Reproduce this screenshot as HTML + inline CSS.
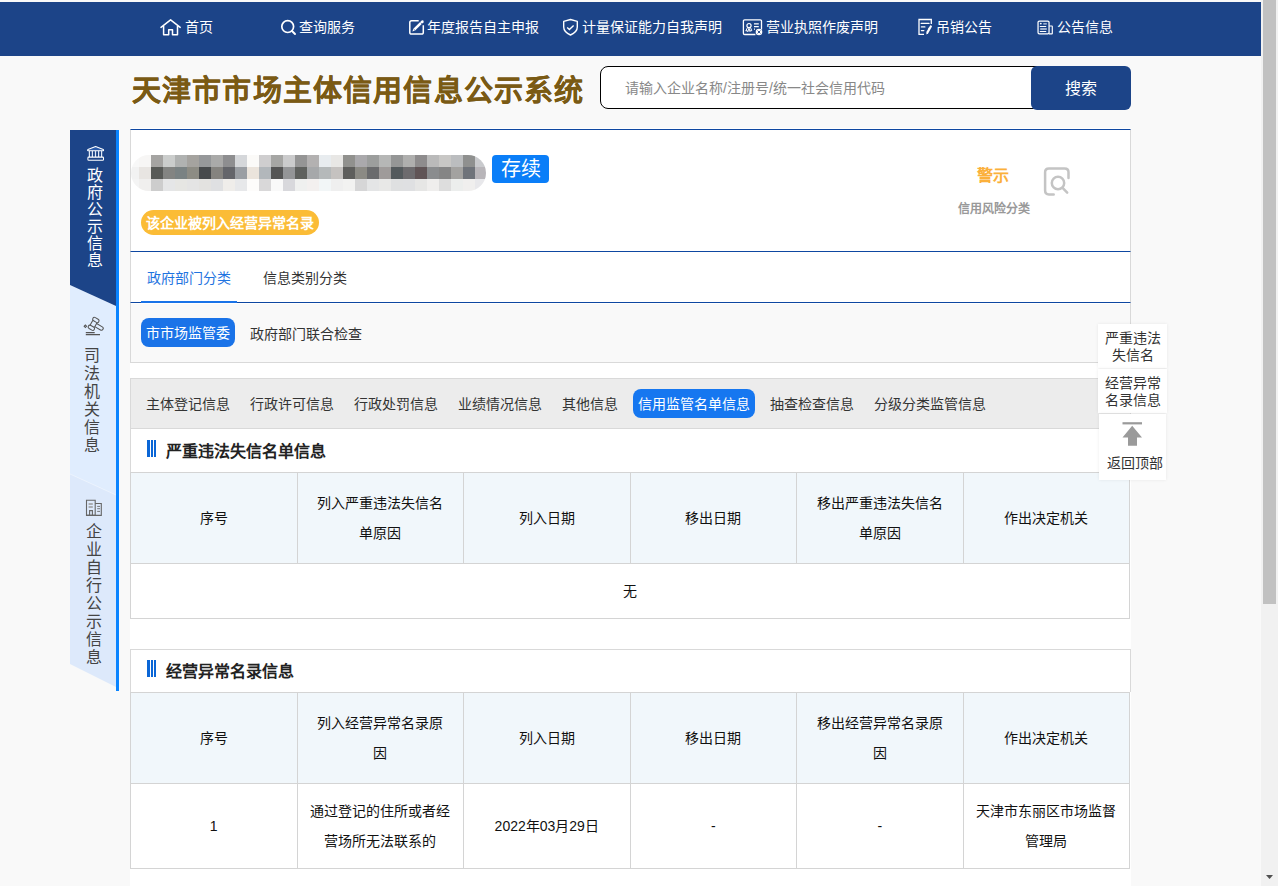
<!DOCTYPE html>
<html lang="zh-CN"><head><meta charset="utf-8">
<style>
*{margin:0;padding:0;box-sizing:border-box;}
html,body{width:1278px;height:886px;overflow:hidden;background:#f9f9f9;font-family:"Liberation Sans",sans-serif;color:#333;}
.abs{position:absolute;}
#nav{position:absolute;left:0;top:2px;width:1261px;height:54px;background:#1c4488;}
.ni{position:absolute;top:-2px;height:54px;line-height:54px;color:#fff;font-size:14px;font-weight:500;white-space:nowrap;}
.ni svg{position:absolute;}
#sb{position:absolute;left:1261px;top:0;width:17px;height:886px;background:#f1f1f1;}
#thumb{position:absolute;left:2px;top:0;width:13px;height:604px;background:#c1c1c1;}
#title{position:absolute;left:132px;top:71px;font-size:29px;font-weight:bold;color:#7a5a14;line-height:41px;white-space:nowrap;letter-spacing:1.16px;-webkit-text-stroke:0.2px #7a5a14;}
#search{position:absolute;left:600px;top:66px;width:450px;height:43px;border:1px solid #000;border-radius:8px;background:#fff;}
#search span{position:absolute;left:24px;top:1px;line-height:41px;font-size:14px;color:#888;white-space:nowrap;}
#sbtn{position:absolute;left:1031px;top:66px;width:100px;height:44px;background:#1c4488;border-radius:6px;color:#fff;font-size:16px;line-height:46px;font-weight:500;text-align:center;}
#side{position:absolute;left:70px;top:130px;width:49px;height:561px;}
#panel{position:absolute;left:130px;top:129px;width:1001px;height:757px;background:#fff;box-shadow:0 -1px 0 #fff;}

.vt{position:absolute;font-size:16px;width:16px;text-align:center;}
#top{position:absolute;left:0;top:0;width:1001px;height:123px;border:1px solid #d9d9d9;border-top:1px solid #0e47a1;border-bottom:1px solid #0e47a1;}
#badge{position:absolute;left:362px;top:26px;width:57px;height:28px;background:#0a7ef8;border-radius:4px;color:#fff;font-size:20px;line-height:28px;text-align:center;}
#warn{position:absolute;left:11px;top:81px;width:178px;height:25px;background:#fbbc36;border-radius:13px;color:#fff;font-size:14px;font-weight:bold;line-height:27px;text-align:center;white-space:nowrap;}
#risk1{position:absolute;left:847px;top:35px;font-size:16px;font-weight:bold;color:#fbb03b;line-height:24px;}
#risk2{position:absolute;left:828px;top:72px;font-size:12px;font-weight:bold;color:#999;line-height:16px;}
#tabs{position:absolute;left:0;top:123px;width:1001px;height:51px;border-left:1px solid #d9d9d9;border-right:1px solid #d9d9d9;border-bottom:1px solid #0e47a1;}
.tab{position:absolute;left:16px;top:1px;line-height:50px;font-size:14px;color:#333;white-space:nowrap;}
.tab.act{color:#1f74e0;}
#tabline{position:absolute;left:10px;top:49px;width:96px;height:2px;background:#1a73e8;}
#sub{position:absolute;left:0;top:174px;width:1001px;height:60px;background:#f9f9f9;box-shadow:inset 0 1px 0 #fff;border-left:1px solid #d9d9d9;border-right:1px solid #d9d9d9;border-bottom:1px solid #d9d9d9;}
#subact{position:absolute;left:10px;top:15px;width:94px;height:29px;background:#1a73e8;border-radius:8px;color:#fff;font-size:14px;line-height:31px;font-weight:500;text-align:center;white-space:nowrap;}
#cats{position:absolute;left:0;top:249px;width:1001px;height:51px;background:#ececec;border:1px solid #d9d9d9;}
#cats span{position:absolute;top:1px;line-height:49px;font-size:14px;color:#333;white-space:nowrap;}
#catact{position:absolute;left:502px;top:10px;width:122px;height:29px;background:#1677f0;border-radius:8px;color:#fff;font-size:14px;line-height:31px;font-weight:500;text-align:center;white-space:nowrap;}
.sec{position:absolute;left:0;width:1001px;}
.st{position:absolute;left:0;top:0;width:1001px;height:43px;border-left:1px solid #d9d9d9;border-right:1px solid #d9d9d9;font-size:16px;font-weight:bold;color:#222;line-height:45px;padding-left:35px;}
.st i{position:absolute;top:11px;width:2px;height:17px;background:#0b66d6;}
.st i:nth-child(1){left:16px;width:3px}.st i:nth-child(2){left:20px}.st i:nth-child(3){left:23px}
table{position:absolute;left:0;width:1000px;border-collapse:collapse;table-layout:fixed;}
td{border:1px solid #d4d4d4;text-align:center;font-size:14px;color:#111;line-height:30px;}
tr.hd{height:91px;background:#f1f7fb;}
#float{position:absolute;left:1098px;top:324px;width:69px;height:156px;}
.fb{position:absolute;left:0;width:69px;background:#fff;font-size:14px;line-height:17px;text-align:center;color:#333;box-shadow:0 0 3px rgba(0,0,0,0.08);}
</style></head><body>
<div id="nav">
  <div class="ni" style="left:160px">
    <svg width="21" height="18" viewBox="0 0 21 18" style="left:0;top:18px"><path d="M1 9.4 L10.6 1.8 L20.2 9.4 M3.6 8.2 V16.8 H8.7 V11.8 H12.5 V16.8 H17.5 V8.2" fill="none" stroke="#fff" stroke-width="1.5" stroke-linejoin="round" stroke-linecap="round"/></svg>
    <span style="position:absolute;left:25px;top:0">首页</span>
  </div>
  <div class="ni" style="left:280px">
    <svg width="17" height="17" viewBox="0 0 17 17" style="left:0;top:19px"><circle cx="7.7" cy="7.6" r="5.9" fill="none" stroke="#fff" stroke-width="1.7"/><path d="M12 12 L15 15" stroke="#fff" stroke-width="1.9" stroke-linecap="round"/></svg>
    <span style="position:absolute;left:19px;top:0">查询服务</span>
  </div>
  <div class="ni" style="left:408px">
    <svg width="17" height="17" viewBox="0 0 17 17" style="left:0;top:19px;overflow:visible"><path d="M10.7 1.8 H3.6 Q1.8 1.8 1.8 3.6 V13.4 Q1.8 15.1 3.6 15.1 H13.5 Q15.3 15.1 15.3 13.4 V6.2" fill="none" stroke="#fff" stroke-width="1.5"/><path d="M4.4 12.4 L5.3 9.7 L13.7 1.5 Q14.6 0.9 15.3 1.6 Q16 2.4 15.5 3.3 L7.1 11.5 Z" fill="#fff"/><path d="M12.6 3.6 L14.2 5.2 M5.6 10 L7 11.4" stroke="#1c4488" stroke-width="0.6"/></svg>
    <span style="position:absolute;left:19px;top:0">年度报告自主申报</span>
  </div>
  <div class="ni" style="left:562px">
    <svg width="17" height="19" viewBox="0 0 17 19" style="left:0;top:18px"><path d="M8.5 1.5 L15.3 3.4 V9 Q15.3 14 8.5 17 Q1.7 14 1.7 9 V3.4 Z" fill="none" stroke="#fff" stroke-width="1.4" stroke-linejoin="round"/><path d="M5.2 9.5 L7.4 11.5 L11.6 7.5" fill="none" stroke="#fff" stroke-width="1.4"/></svg>
    <span style="position:absolute;left:20px;top:0">计量保证能力自我声明</span>
  </div>
  <div class="ni" style="left:742px">
    <svg width="22" height="18" viewBox="0 0 22 18" style="left:0;top:19px"><path d="M19.5 10.4 V2.1 Q19.5 0.8 18.2 0.8 H2.7 Q1.4 0.8 1.4 2.1 V14.2 Q1.4 15.5 2.7 15.5 H13.4" fill="none" stroke="#fff" stroke-width="1.3"/><circle cx="7" cy="6.6" r="2.1" fill="none" stroke="#fff" stroke-width="1.2"/><path d="M5.6 8.3 L3.8 12 L5.2 11.6 L5.8 12.8 L7 9.2 M8.4 8.3 L9.8 11.8 L8.6 11.4 L8 12.6 L7 9.2" fill="none" stroke="#fff" stroke-width="1"/><path d="M12 4.9 H16.8 M12 7.6 H16.8" stroke="#fff" stroke-width="1.2"/><path d="M12.5 9.5 V10.8" stroke="#fff" stroke-width="1"/><circle cx="17" cy="13" r="3.3" fill="#fff"/><path d="M15.6 11.6 L18.4 14.4 M18.4 11.6 L15.6 14.4" stroke="#1c4488" stroke-width="0.9"/></svg>
    <span style="position:absolute;left:24px;top:0">营业执照作废声明</span>
  </div>
  <div class="ni" style="left:918px">
    <svg width="16" height="18" viewBox="0 0 16 18" style="left:0;top:18px"><path d="M6 16.4 H1 V1.5 H13.3 V6" fill="none" stroke="#fff" stroke-width="1.3"/><path d="M3.2 5.4 H11 M3.4 8.9 H6.9 M3.4 12.6 H5.8" stroke="#fff" stroke-width="1.3" stroke-linecap="round"/><path d="M8.4 16.4 L8.35 14.09 L12.15 7.45 Q13.1 6.9 14.05 8.55 L10.25 15.19 Z" fill="#fff"/><path d="M11.2 9.5 L10.4 11" stroke="#fff" stroke-width="0.8"/></svg>
    <span style="position:absolute;left:18px;top:0">吊销公告</span>
  </div>
  <div class="ni" style="left:1037px">
    <svg width="17" height="18" viewBox="0 0 17 18" style="left:0;top:18px"><rect x="1.05" y="3" width="11" height="12.8" rx="1.3" fill="none" stroke="#fff" stroke-width="1.25"/><path d="M12.1 8 H14.9 Q15.3 8 15.3 8.4 V15.4 Q15.3 15.8 14.9 15.8 H12" fill="none" stroke="#fff" stroke-width="1.15"/><circle cx="3.8" cy="5.6" r="0.9" fill="#fff"/><path d="M6.3 5.9 H9.8 M3.2 11 H9.8" stroke="#c8d3e6" stroke-width="1.3"/><path d="M3.2 8.5 H8.8 M3.2 13.5 H8.8" stroke="#fff" stroke-width="1.1" stroke-linecap="round"/></svg>
    <span style="position:absolute;left:20px;top:0">公告信息</span>
  </div>
</div>
<div id="sb"><div id="thumb"></div><svg width="17" height="10" style="position:absolute;left:0;top:871px"><path d="M5 4 H12 L8.5 8 Z" fill="#505050"/></svg></div>
<div id="title">天津市市场主体信用信息公示系统</div>
<div id="search"><span>请输入企业名称/注册号/统一社会信用代码</span></div>
<div id="sbtn">搜索</div>
<div id="panel">
  <div id="top"></div>
  <svg width="355" height="36" style="position:absolute;left:1px;top:26px"><defs><clipPath id="pc"><rect x="0" y="0" width="355" height="36" rx="18"/></clipPath></defs><g clip-path="url(#pc)" shape-rendering="crispEdges"><rect x="-4" y="0" width="12" height="12" fill="#f8f8f8"/><rect x="8" y="0" width="12" height="12" fill="#f7f6f5"/><rect x="20" y="0" width="12" height="12" fill="#a5a4a2"/><rect x="32" y="0" width="12" height="12" fill="#cbcdcc"/><rect x="44" y="0" width="12" height="12" fill="#b0b2b1"/><rect x="56" y="0" width="12" height="12" fill="#a5a39f"/><rect x="68" y="0" width="12" height="12" fill="#96989a"/><rect x="80" y="0" width="12" height="12" fill="#aaaaa9"/><rect x="92" y="0" width="12" height="12" fill="#8e8e90"/><rect x="104" y="0" width="12" height="12" fill="#d5d7da"/><rect x="116" y="0" width="12" height="12" fill="#fbfaf8"/><rect x="128" y="0" width="12" height="12" fill="#cfcecf"/><rect x="140" y="0" width="12" height="12" fill="#a6a6a4"/><rect x="152" y="0" width="12" height="12" fill="#cbcbcc"/><rect x="164" y="0" width="12" height="12" fill="#959595"/><rect x="176" y="0" width="12" height="12" fill="#b3b1b1"/><rect x="188" y="0" width="12" height="12" fill="#e8ecef"/><rect x="200" y="0" width="12" height="12" fill="#e8e7e5"/><rect x="212" y="0" width="12" height="12" fill="#91918e"/><rect x="224" y="0" width="12" height="12" fill="#aaa9ac"/><rect x="236" y="0" width="12" height="12" fill="#9c9e9d"/><rect x="248" y="0" width="12" height="12" fill="#b6b7b6"/><rect x="260" y="0" width="12" height="12" fill="#959696"/><rect x="272" y="0" width="12" height="12" fill="#afafae"/><rect x="284" y="0" width="12" height="12" fill="#8e8c8d"/><rect x="296" y="0" width="12" height="12" fill="#bababa"/><rect x="308" y="0" width="12" height="12" fill="#c8c7c5"/><rect x="320" y="0" width="12" height="12" fill="#bbbdbf"/><rect x="332" y="0" width="12" height="12" fill="#8f908f"/><rect x="344" y="0" width="12" height="12" fill="#c9cacd"/><rect x="-4" y="12" width="12" height="12" fill="#f2f2f2"/><rect x="8" y="12" width="12" height="12" fill="#e8e5e2"/><rect x="20" y="12" width="12" height="12" fill="#585a57"/><rect x="32" y="12" width="12" height="12" fill="#838482"/><rect x="44" y="12" width="12" height="12" fill="#7a8283"/><rect x="56" y="12" width="12" height="12" fill="#8d8c84"/><rect x="68" y="12" width="12" height="12" fill="#474a4c"/><rect x="80" y="12" width="12" height="12" fill="#85837f"/><rect x="92" y="12" width="12" height="12" fill="#64656a"/><rect x="104" y="12" width="12" height="12" fill="#9a9ea3"/><rect x="116" y="12" width="12" height="12" fill="#ebe4dc"/><rect x="128" y="12" width="12" height="12" fill="#b2b7bb"/><rect x="140" y="12" width="12" height="12" fill="#555555"/><rect x="152" y="12" width="12" height="12" fill="#949597"/><rect x="164" y="12" width="12" height="12" fill="#5f615e"/><rect x="176" y="12" width="12" height="12" fill="#a6a8aa"/><rect x="188" y="12" width="12" height="12" fill="#b5b9ba"/><rect x="200" y="12" width="12" height="12" fill="#c5c2c0"/><rect x="212" y="12" width="12" height="12" fill="#5e5e5c"/><rect x="224" y="12" width="12" height="12" fill="#8b8a84"/><rect x="236" y="12" width="12" height="12" fill="#6a6b6d"/><rect x="248" y="12" width="12" height="12" fill="#9f9b9a"/><rect x="260" y="12" width="12" height="12" fill="#545a5d"/><rect x="272" y="12" width="12" height="12" fill="#6d6b6e"/><rect x="284" y="12" width="12" height="12" fill="#605456"/><rect x="296" y="12" width="12" height="12" fill="#8a8c8e"/><rect x="308" y="12" width="12" height="12" fill="#858585"/><rect x="320" y="12" width="12" height="12" fill="#a3a2a0"/><rect x="332" y="12" width="12" height="12" fill="#6f737a"/><rect x="344" y="12" width="12" height="12" fill="#b8b5b9"/><rect x="-4" y="24" width="12" height="12" fill="#f4f4f4"/><rect x="8" y="24" width="12" height="12" fill="#f0efee"/><rect x="20" y="24" width="12" height="12" fill="#cdcdcd"/><rect x="32" y="24" width="12" height="12" fill="#e5e6e7"/><rect x="44" y="24" width="12" height="12" fill="#e6e6e3"/><rect x="56" y="24" width="12" height="12" fill="#e4e4e4"/><rect x="68" y="24" width="12" height="12" fill="#e3e2e0"/><rect x="80" y="24" width="12" height="12" fill="#dfe0e2"/><rect x="92" y="24" width="12" height="12" fill="#efedea"/><rect x="104" y="24" width="12" height="12" fill="#e7e8ea"/><rect x="116" y="24" width="12" height="12" fill="#fdfcfb"/><rect x="128" y="24" width="12" height="12" fill="#d9d8d9"/><rect x="140" y="24" width="12" height="12" fill="#f9f9f9"/><rect x="152" y="24" width="12" height="12" fill="#d8d8dc"/><rect x="164" y="24" width="12" height="12" fill="#eff0ef"/><rect x="176" y="24" width="12" height="12" fill="#f3f0ef"/><rect x="188" y="24" width="12" height="12" fill="#f2f6f7"/><rect x="200" y="24" width="12" height="12" fill="#efefef"/><rect x="212" y="24" width="12" height="12" fill="#f2f2f1"/><rect x="224" y="24" width="12" height="12" fill="#d6d6d7"/><rect x="236" y="24" width="12" height="12" fill="#e4e5e6"/><rect x="248" y="24" width="12" height="12" fill="#e8e8e7"/><rect x="260" y="24" width="12" height="12" fill="#dfe0e1"/><rect x="272" y="24" width="12" height="12" fill="#dfe0e2"/><rect x="284" y="24" width="12" height="12" fill="#e6e6e5"/><rect x="296" y="24" width="12" height="12" fill="#efeeed"/><rect x="308" y="24" width="12" height="12" fill="#dddddd"/><rect x="320" y="24" width="12" height="12" fill="#eceeed"/><rect x="332" y="24" width="12" height="12" fill="#f0efee"/><rect x="344" y="24" width="12" height="12" fill="#e8e8eb"/></g></svg>
  <div id="badge">存续</div>
  <div id="warn">该企业被列入经营异常名录</div>
  <div id="risk1">警示</div>
  <div id="risk2">信用风险分类</div>
  <svg width="27" height="30" viewBox="0 0 27 30" style="position:absolute;left:913px;top:38px"><path d="M25.5 10.9 V5.2 Q25.5 1.4 21.7 1.4 H5.9 Q2.1 1.4 2.1 5.2 V23.6 Q2.1 27.4 5.9 27.4 H10.7" fill="none" stroke="#c4c4c4" stroke-width="2.5" stroke-linecap="round"/><circle cx="15" cy="16" r="6.2" fill="none" stroke="#c4c4c4" stroke-width="2.5"/><path d="M19.6 20.8 L24.2 25.6" stroke="#c4c4c4" stroke-width="2.5" stroke-linecap="round"/></svg>
  <div id="tabs"><div class="tab act">政府部门分类</div><div class="tab" style="left:132px">信息类别分类</div><div id="tabline"></div></div>
  <div id="sub"><div id="subact">市市场监管委</div><div style="position:absolute;left:119px;top:1px;line-height:60px;font-size:14px;color:#333">政府部门联合检查</div></div>
  <div id="cats">
    <span style="left:15px">主体登记信息</span><span style="left:119px">行政许可信息</span><span style="left:223px">行政处罚信息</span><span style="left:327px">业绩情况信息</span><span style="left:431px">其他信息</span>
    <div id="catact">信用监管名单信息</div>
    <span style="left:639px">抽查检查信息</span><span style="left:743px">分级分类监管信息</span>
  </div>
  <div class="sec" style="top:300px;height:190px">
    <div class="st"><i></i><i></i><i></i>严重违法失信名单信息</div>
    <table style="top:43px">
      <tr class="hd"><td>序号</td><td>列入严重违法失信名<br>单原因</td><td>列入日期</td><td>移出日期</td><td>移出严重违法失信名<br>单原因</td><td>作出决定机关</td></tr>
      <tr style="height:55px"><td colspan="6">无</td></tr>
    </table>
  </div>
  <div class="sec" style="top:520px;height:220px">
    <div class="st" style="box-shadow:inset 0 1px 0 #d9d9d9"><i></i><i></i><i></i>经营异常名录信息</div>
    <table style="top:43px">
      <tr class="hd"><td>序号</td><td>列入经营异常名录原<br>因</td><td>列入日期</td><td>移出日期</td><td>移出经营异常名录原<br>因</td><td>作出决定机关</td></tr>
      <tr style="height:85px"><td>1</td><td>通过登记的住所或者经<br>营场所无法联系的</td><td>2022年03月29日</td><td>-</td><td>-</td><td>天津市东丽区市场监督<br>管理局</td></tr>
    </table>
  </div>
</div>
<div id="float">
  <div class="fb" style="top:0;height:44px;padding-top:6px">严重违法<br>失信名</div>
  <div class="fb" style="top:45px;height:44px;padding-top:6px">经营异常<br>名录信息</div>
  <div class="fb" style="top:90px;height:66px;left:1px;width:67px">
    <svg width="24" height="30" viewBox="0 0 24 30" style="position:absolute;left:21px;top:6px"><rect x="2.5" y="2.2" width="19.5" height="2.2" fill="#9a9a9a"/><path d="M12.2 5.8 L22 17.5 H17 V25.7 H8 V17.5 H2.5 Z" fill="#9a9a9a"/></svg>
    <div style="position:absolute;left:2px;width:100%;top:41px;text-align:center">返回顶部</div>
  </div>
</div>
<div id="side">
  <svg width="49" height="561" style="position:absolute;left:0;top:0">
    <polygon points="0,343 46,364 46,557 0,534" fill="#dde9fb"/>
    <polygon points="0,155 46,176 46,365 0,344" fill="#e0edfe"/>
    <line x1="0" y1="344" x2="46" y2="365" stroke="#fff" stroke-opacity="0.45" stroke-width="0.9"/>
    <polygon points="0,0 46,0 46,176 0,155" fill="#1c4488"/>
    <rect x="46" y="0" width="3" height="561" fill="#0a84ff"/>
  </svg>
  <svg width="24" height="22" viewBox="0 0 24 22" style="position:absolute;left:14px;top:12px"><g fill="none" stroke="#fff" stroke-linejoin="round"><path d="M4.2 8.8 Q3.2 8.5 3.9 7.5 L11.6 4.5 L19.3 7.5 Q20 8.5 19 8.8 Z" stroke-width="1.1" fill="#2a5aa8"/><path d="M5.4 8.8 V15 M8.4 8.8 V15 M11.5 8.8 V15 M14.6 8.8 V15 M17.6 8.8 V15" stroke-width="1.2" stroke="#dfe8f6"/><rect x="3.9" y="15.1" width="15.6" height="3.2" rx="0.8" stroke-width="1.05"/></g></svg>
  <div class="vt" style="left:17px;top:37px;color:#fff;line-height:17px">政<br>府<br>公<br>示<br>信<br>息</div>
  <svg width="22" height="24" viewBox="0 0 22 24" style="position:absolute;left:12px;top:184px"><g fill="none" stroke="#555" stroke-width="1.05"><g transform="translate(11.6 9.9) rotate(30)"><rect x="-3.4" y="-6.3" width="6.8" height="3.6" rx="1.8"/><rect x="-3.4" y="2.7" width="6.8" height="3.6" rx="1.8"/><path d="M-2.4 -2.7 V2.7 M2.4 -2.7 V2.7"/><path d="M2.4 -1.8 H9 A1.8 1.8 0 0 1 9 1.8 H2.4"/></g><rect x="2.5" y="11.4" width="1.7" height="1.7" transform="rotate(45 3.35 12.25)"/></g><path d="M3.8 18.6 H12.7 M3.8 20.6 H18" stroke="#555" stroke-width="1.1"/></svg>
  <div class="vt" style="left:14px;top:217px;color:#444;line-height:18px">司<br>法<br>机<br>关<br>信<br>息</div>
  <svg width="24" height="24" viewBox="0 0 24 24" style="position:absolute;left:12px;top:366px"><g fill="none" stroke="#666" stroke-width="1.1"><path d="M4.5 19.4 V4.3 H13.2 V19.4 Z"/><path d="M13.2 7.5 H19.3 V19.4 H4.5"/><path d="M7.6 19.4 V14.6 H10.4 V19.4"/></g><path d="M6.6 8 H10.8 M6.6 11 H10.8" stroke="#999" stroke-width="1.5"/><path d="M15.2 10.4 H18 M15.2 12.7 H18 M15.2 15.4 H18" stroke="#777" stroke-width="1"/></svg>
  <div class="vt" style="left:16px;top:393px;color:#444;line-height:18px">企<br>业<br>自<br>行<br>公<br>示<br>信<br>息</div>
</div>
</body></html>
